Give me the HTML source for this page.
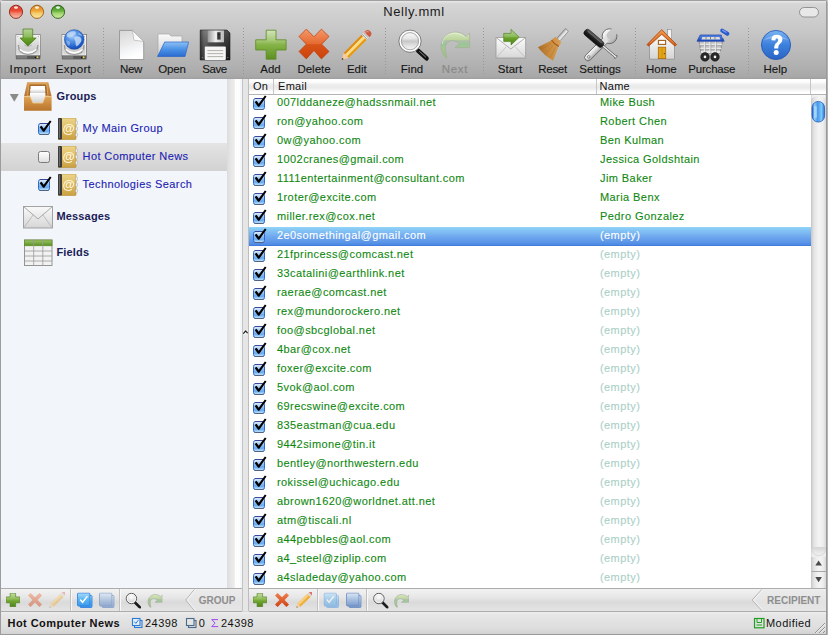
<!DOCTYPE html>
<html><head><meta charset="utf-8">
<style>
*{margin:0;padding:0;box-sizing:border-box}
html,body{width:828px;height:635px;overflow:hidden;background:#c8c8c8}
body{font-family:"Liberation Sans",sans-serif;position:relative}
.a{position:absolute}
#win{position:absolute;left:0;top:0;width:828px;height:635px;overflow:hidden;border-radius:4px 4px 0 0;background:#d8d8d8}
#tb{left:0;top:0;width:828px;height:79px;background:linear-gradient(#a0a0a0 0,#a0a0a0 1px,#eaeaea 1px,#e0e0e0 2px,#d6d6d6 4px,#d0d0d0 14px,#cacaca 26px,#c4c4c4 36px,#bebebe 44px,#b7b7b7 56px,#afafaf 68px,#a9a9a9 76px,#a4a4a4 78px,#9c9c9c 79px)}
#title{left:0;top:3px;width:828px;text-align:center;font-size:13px;letter-spacing:0.62px;color:#1a1a1a;line-height:18px}
.lbl{position:absolute;top:63px;font-size:11.5px;color:#161616;-webkit-text-stroke:0.12px #161616;line-height:13px;text-align:center;width:80px;margin-left:-40px;white-space:nowrap}
.sep{position:absolute;top:28px;height:46px;width:1px;background:repeating-linear-gradient(#979797 0 1px,transparent 1px 3px)}
#side{left:1px;top:79px;width:226px;height:509px;background:#f2f5f9}
#sstrip{left:227px;top:79px;width:15px;height:509px;background:linear-gradient(90deg,#dcdcdc 0,#e4e4e4 3px,#ececec 7px,#f2f2f2 8px,#fdfdfd 8.5px,#fdfdfd 13px,#f4f7fa 13px)}
#split{left:242px;top:79px;width:7px;height:532px;background:#e6e6e6;border-left:1px solid #c3c3c3;border-right:1px solid #bdbdbd}
#tbl{left:249px;top:79px;width:562px;height:509px;background:#fff}
#hdr{left:249px;top:79px;width:577px;height:15px;background:linear-gradient(#fff 0,#fcfcfc 3px,#ececec 6px,#eaeaea 9px,#f4f4f4 11px,#fff 13px)}
#hdrb{left:249px;top:94px;width:577px;height:1px;background:#b4b4b4}
.hd{position:absolute;top:79px;font-size:11px;letter-spacing:0.3px;color:#111;line-height:15px}
.vd{position:absolute;top:79px;width:1px;height:15px;background:#c6c6c6}
.row{position:absolute;left:249px;width:562px;height:19px}
.row .em{position:absolute;left:28px;top:1px;font-size:11px;line-height:15px;color:#108810;letter-spacing:0.42px;white-space:nowrap;-webkit-text-stroke:0.1px #108810}
.row .nm{position:absolute;left:351px;top:1px;font-size:11px;line-height:15px;color:#108810;letter-spacing:0.42px;white-space:nowrap;-webkit-text-stroke:0.1px #108810}
.row .nm.e{color:#aad0c6;-webkit-text-stroke:0.1px #aad0c6}
.row svg.cb{position:absolute;left:4px;top:0}
.row.sel{background:linear-gradient(#94d6f8 0,#88cbf6 2px,#7cb8f2 6px,#6ea6ee 10px,#5c96e8 15px,#4f8ae4 17.5px,#3e7ddc 18px)}
.row.sel .em,.row.sel .nm{color:#fff;-webkit-text-stroke:0.1px #fff}
#vscroll{left:811px;top:95px;width:15px;height:493px;background:linear-gradient(90deg,#c6c6c6,#e4e4e4 3px,#f4f4f4 8px,#eeeeee 12px,#d8d8d8)}
#rb{left:826px;top:0;width:2px;height:635px;background:linear-gradient(90deg,#9a9a9a 0,#9a9a9a 1px,#b4b4b4 1px)}
#bbl{left:1px;top:588px;width:241px;height:24px;background:linear-gradient(#f2f2f2,#e6e6e6 40%,#dadada 60%,#e4e4e4);border-top:1px solid #acacac;border-bottom:1px solid #acacac}
#bbr{left:249px;top:588px;width:577px;height:24px;background:linear-gradient(#f2f2f2,#e6e6e6 40%,#dadada 60%,#e4e4e4);border-top:1px solid #acacac;border-bottom:1px solid #acacac}
#status{left:0;top:612px;width:828px;height:23px;background:linear-gradient(#eeeeee,#e6e6e6 3px,#dedede 16px,#d2d2d2 22px);border-bottom:1px solid #9a9a9a}
#lb{left:0;top:0;width:1px;height:635px;background:#9c9c9c}
.st{position:absolute;font-size:11px;letter-spacing:0.45px;line-height:15px;color:#111;white-space:nowrap}
.sg{position:absolute;top:82px;font-size:11px;letter-spacing:0.15px;font-weight:bold;color:#1a1c58;line-height:15px}
.gi{position:absolute;font-size:11px;color:#1c22b4;line-height:15px;letter-spacing:0.4px;-webkit-text-stroke:0.1px #1c22b4;white-space:nowrap}

</style></head><body>
<svg width="0" height="0" style="position:absolute">
<defs>
<linearGradient id="cbg" x1="0" y1="0" x2="0" y2="1">
<stop offset="0" stop-color="#e4f0fb"/><stop offset="0.45" stop-color="#8cbdf2"/><stop offset="0.7" stop-color="#6aa8ee"/><stop offset="1" stop-color="#c4ecfa"/>
</linearGradient>
<linearGradient id="selg" x1="0" y1="0" x2="0" y2="1"><stop offset="0" stop-color="#e4e4e4"/><stop offset="1" stop-color="#d2d2d2"/></linearGradient>
<symbol id="chk" viewBox="0 0 15 16">
<rect x="0.5" y="4.5" width="11" height="11" rx="2" fill="url(#cbg)" stroke="#3068d0"/>
<path d="M2 4.5 H10" stroke="#3c4898" stroke-width="1"/>
<path d="M1.6 15.6 H10.4" stroke="#5a607a" stroke-width="1"/>
<path d="M1.6 7.9 L3.6 6.7 L5.7 9.8 L11.9 1.6 L13.5 2.6 L6.3 12.8 L5.1 12.8 Z" fill="#000"/>
</symbol>
<symbol id="uchk" viewBox="0 0 15 16">
<rect x="0.5" y="4.5" width="11" height="11" rx="2" fill="url(#ucb)" stroke="#7a7a7a"/>
</symbol>
</defs>
</svg>

<div id="win">
<div id="tb" class="a"></div>
<div id="title" class="a">Nelly.mml</div>
<svg class="a" style="left:0;top:0" width="828" height="79" viewBox="0 0 828 79">
<defs>
<linearGradient id="drv" x1="0" y1="0" x2="0" y2="1"><stop offset="0" stop-color="#f2f2f2"/><stop offset="0.5" stop-color="#d6d6d6"/><stop offset="1" stop-color="#bcbcbc"/></linearGradient>
<linearGradient id="garr" x1="0" y1="0" x2="0" y2="1"><stop offset="0" stop-color="#b6d49a"/><stop offset="0.45" stop-color="#8cbc5a"/><stop offset="0.55" stop-color="#6aa22c"/><stop offset="1" stop-color="#4a8414"/></linearGradient>
<radialGradient id="globe" cx="0.4" cy="0.3" r="0.75"><stop offset="0" stop-color="#b8d8fa"/><stop offset="0.35" stop-color="#5c9ae8"/><stop offset="0.8" stop-color="#1d5cc8"/><stop offset="1" stop-color="#1446a8"/></radialGradient>
<linearGradient id="page" x1="0" y1="0" x2="0.3" y2="1"><stop offset="0" stop-color="#d6d6d6"/><stop offset="0.45" stop-color="#e8e8e8"/><stop offset="0.8" stop-color="#f6f8fa"/><stop offset="1" stop-color="#ffffff"/></linearGradient>
<linearGradient id="fblue" x1="0" y1="0" x2="0" y2="1"><stop offset="0" stop-color="#8ec0f4"/><stop offset="0.5" stop-color="#4c92e6"/><stop offset="1" stop-color="#2a6ad0"/></linearGradient>
<linearGradient id="fback" x1="0" y1="0" x2="0" y2="1"><stop offset="0" stop-color="#fafafa"/><stop offset="1" stop-color="#cfcfcf"/></linearGradient>
<linearGradient id="flop" x1="0" y1="0" x2="0" y2="1"><stop offset="0" stop-color="#6a6a6a"/><stop offset="0.4" stop-color="#4a4a4a"/><stop offset="1" stop-color="#262626"/></linearGradient><linearGradient id="flop2" x1="0" y1="0" x2="1" y2="0"><stop offset="0" stop-color="#000" stop-opacity="0.35"/><stop offset="0.2" stop-color="#fff" stop-opacity="0.12"/><stop offset="0.5" stop-color="#000" stop-opacity="0"/><stop offset="1" stop-color="#000" stop-opacity="0.35"/></linearGradient>
<linearGradient id="shut" x1="0" y1="0" x2="1" y2="0"><stop offset="0" stop-color="#9a9a9a"/><stop offset="0.5" stop-color="#f0f0f0"/><stop offset="1" stop-color="#b8b8b8"/></linearGradient>
<linearGradient id="gplus" x1="0" y1="0" x2="0" y2="1"><stop offset="0" stop-color="#d4e4bc"/><stop offset="0.35" stop-color="#a6c878"/><stop offset="0.5" stop-color="#86b448"/><stop offset="1" stop-color="#5c9020"/></linearGradient>
<linearGradient id="rx" x1="0" y1="0" x2="0" y2="1"><stop offset="0" stop-color="#f0905a"/><stop offset="0.45" stop-color="#e66a30"/><stop offset="1" stop-color="#c83c0c"/></linearGradient>
<radialGradient id="lens" cx="0.5" cy="0.35" r="0.7"><stop offset="0" stop-color="#ffffff"/><stop offset="0.6" stop-color="#d0d0d0"/><stop offset="1" stop-color="#a8a8a8"/></radialGradient>
<linearGradient id="env" x1="0" y1="0" x2="0" y2="1"><stop offset="0" stop-color="#fcfcfc"/><stop offset="1" stop-color="#d8d8d8"/></linearGradient>
<linearGradient id="broom" x1="0" y1="0" x2="1" y2="1"><stop offset="0" stop-color="#e0a860"/><stop offset="0.6" stop-color="#c88a3c"/><stop offset="1" stop-color="#a86a24"/></linearGradient>
<linearGradient id="silver" x1="0" y1="0" x2="1" y2="0"><stop offset="0" stop-color="#8a8a8a"/><stop offset="0.5" stop-color="#f0f0f0"/><stop offset="1" stop-color="#9a9a9a"/></linearGradient>
<linearGradient id="roof" x1="0" y1="0" x2="0" y2="1"><stop offset="0" stop-color="#f09040"/><stop offset="1" stop-color="#c85810"/></linearGradient>
<linearGradient id="wall" x1="0" y1="0" x2="0" y2="1"><stop offset="0" stop-color="#ffffff"/><stop offset="1" stop-color="#d4d4d4"/></linearGradient>
<linearGradient id="cartb" x1="0" y1="0" x2="0" y2="1"><stop offset="0" stop-color="#5a8ae8"/><stop offset="1" stop-color="#1a48b8"/></linearGradient>
<linearGradient id="help" x1="0" y1="0" x2="0" y2="1"><stop offset="0" stop-color="#7ab4f4"/><stop offset="0.5" stop-color="#3c80dc"/><stop offset="1" stop-color="#2a64c4"/></linearGradient>
</defs>
<!-- Import: drive + green arrow -->
<defs>
<linearGradient id="drvface" x1="0" y1="0" x2="0" y2="1"><stop offset="0" stop-color="#f4f4f4"/><stop offset="0.35" stop-color="#dedede"/><stop offset="0.7" stop-color="#cdcdcd"/><stop offset="1" stop-color="#e2e2e2"/></linearGradient>
<symbol id="drive" viewBox="0 0 26 26">
<rect x="0.4" y="0.4" width="25.2" height="22" fill="url(#drvface)" stroke="#7a7a7a" stroke-width="0.8"/>
<rect x="1.6" y="1.6" width="22.8" height="19.6" fill="none" stroke="#ffffff" stroke-width="0.6" opacity="0.8"/>
<path d="M3 11 Q3 20.5 13 20.5 Q23 20.5 23 11" fill="none" stroke="#8e8e8e" stroke-width="1.4" opacity="0.8"/>
<path d="M4.5 15.5 Q13 22.5 21.5 15.5" fill="none" stroke="#ffffff" stroke-width="1.5"/>
<path d="M9 11 Q13 14 17 11" fill="none" stroke="#9a9a9a" stroke-width="1" opacity="0.6"/>
<circle cx="2.6" cy="2.6" r="0.5" fill="#777"/><circle cx="23.4" cy="2.6" r="0.5" fill="#777"/>
<rect x="0.4" y="21.6" width="25.2" height="4" fill="#5a5a5a"/>
<rect x="1" y="22.2" width="11" height="2.8" fill="#7a7a7a"/>
<circle cx="20.5" cy="23.8" r="0.8" fill="#111"/>
<circle cx="22.6" cy="23.4" r="0.9" fill="#f4d040"/>
</symbol>
</defs>
<use href="#drive" x="15.4" y="34" width="25.4" height="26"/>
<path d="M23 29 H32.7 V38 H36.2 L27.9 46 L20 38 H23 Z" fill="url(#garr)" stroke="#4a7a18" stroke-width="0.7"/>
<!-- Export: drive + globe -->
<use href="#drive" x="61.4" y="34" width="25.6" height="26"/>
<circle cx="74.2" cy="39.5" r="9.8" fill="url(#globe)" stroke="#1a4aa8" stroke-width="0.6"/>
<path d="M67 33.5 Q70 31 74.5 31.2 Q77 32.5 75 34.5 Q72.5 35 71 37 Q69 38 67.5 37 Q66 35.5 67 33.5 Z" fill="#c8def6" opacity="0.7"/>
<path d="M74.5 37 Q78 35.5 80.5 37.5 Q82.5 40 80.5 42.5 Q78.5 45.5 76.5 46.5 Q75 44 75.5 41.5 Q73.5 39.5 74.5 37 Z" fill="#d4e6f8" opacity="0.75"/>
<path d="M66 40.5 Q68.5 40 70 42 Q70.5 44.5 69 46 Q66.5 44.5 66 40.5 Z" fill="#a8c8f0" opacity="0.6"/>
<path d="M78.5 32.5 Q81 33.5 82.5 36 Q80.5 35.8 78.5 34.5 Z" fill="#c8def6" opacity="0.6"/>
<!-- New -->
<path d="M119.5 30.4 H132.4 L143.7 41.6 V59.5 H119.5 Z" fill="url(#page)" stroke="#8e8e8e" stroke-width="0.8"/>
<path d="M132.4 30.4 L134 40 L143.7 41.6 Z" fill="#b8b8b8" opacity="0.5"/>
<path d="M132.4 30.4 Q133.6 36 133.8 40.2 Q138.5 40.6 143.7 41.6 Z" fill="#fafafa" stroke="#a0a0a0" stroke-width="0.5"/>
<!-- Open -->
<path d="M158 56 V34 H169 L171 36 H182 V56 Z" fill="url(#fback)" stroke="#a8a8a8" stroke-width="0.7"/>
<path d="M157.5 56.5 L164.7 42 H188.6 L185 56.5 Z" fill="url(#fblue)" stroke="#2a64c4" stroke-width="0.7"/>
<!-- Save -->
<path d="M200.2 30 H227 L230 33 V60 H200.2 Z" fill="url(#flop)" stroke="#222" stroke-width="0.6"/>
<path d="M200.2 30 H227 L230 33 V60 H200.2 Z" fill="url(#flop2)"/>
<rect x="207.6" y="30.5" width="16.4" height="11.8" fill="url(#shut)"/>
<rect x="217.2" y="32.2" width="3.4" height="7.4" fill="#3a3a3a"/>
<circle cx="218.8" cy="34.2" r="0.5" fill="#000"/>
<rect x="204.8" y="46.6" width="21" height="13.4" rx="1" fill="#f6f6f6"/>
<rect x="207.4" y="50.2" width="15.8" height="0.9" fill="#a8a8a0"/>
<rect x="207.4" y="53.2" width="15.8" height="0.9" fill="#a8a8a0"/>
<rect x="207.4" y="56.2" width="15.8" height="0.9" fill="#a8a8a0"/>
<circle cx="202.4" cy="57.5" r="0.6" fill="#888"/><circle cx="227.8" cy="57.5" r="0.6" fill="#888"/>
<!-- Add -->
<path d="M266.2 30.2 H276 V39.8 H286.1 V50 H276 V59.2 H266.2 V50 H255.7 V39.8 H266.2 Z" fill="url(#gplus)" stroke="#5a8a22" stroke-width="0.8"/>
<!-- Delete -->
<defs><linearGradient id="rx2" x1="0" y1="0" x2="0" y2="1"><stop offset="0" stop-color="#f29a6a"/><stop offset="0.3" stop-color="#ec7c48"/><stop offset="0.5" stop-color="#e46a30"/><stop offset="0.52" stop-color="#d85418"/><stop offset="1" stop-color="#cc420c"/></linearGradient></defs>
<path d="M306.3 29.1 L314 36.8 L321.4 29.1 L329 36.5 L321.7 44.2 L329 51.5 L321.4 58.9 L314 50.4 L306.3 58.9 L299 51.5 L306.3 44.2 L299 36.5 Z" fill="url(#rx2)" stroke="#c03c08" stroke-width="0.7" stroke-linejoin="round"/>
<!-- Edit pencil -->
<g transform="translate(341.6 60) rotate(-45.2)">
<path d="M0 0 L6.5 -3.5 H32 V3.5 H6.5 Z" fill="#f0b440"/>
<path d="M6.5 -3.5 H32 V-1.6 H6.5 Z" fill="#dc8a14"/>
<path d="M6.5 -1.4 H32 V1.2 H6.5 Z" fill="#f8dc8c"/>
<path d="M6.5 1.6 H32 V3.5 H6.5 Z" fill="#e8980e"/>
<path d="M0 0 L6.5 -3.5 V3.5 Z" fill="#f2cca4"/>
<path d="M0 0 L2 -1.1 V1.1 Z" fill="#3a3a3a"/>
<rect x="32" y="-3.6" width="3.8" height="7.2" fill="#e8e8e8"/>
<path d="M32.8 -3.6 V3.6 M34.6 -3.6 V3.6" stroke="#7a7a7a" stroke-width="0.6"/>
<path d="M35.8 -3.6 H37 A3.6 3.6 0 0 1 37 3.6 H35.8 Z" fill="#cc5a40"/>
<path d="M36.2 -2.6 Q38.5 -2.4 39 -0.6" fill="none" stroke="#f0a090" stroke-width="0.9"/>
</g>
<!-- Find -->
<defs><linearGradient id="glass" x1="0" y1="0" x2="0" y2="1"><stop offset="0" stop-color="#fafafa"/><stop offset="0.35" stop-color="#e6e6e6"/><stop offset="0.5" stop-color="#c6c6c6"/><stop offset="0.75" stop-color="#e2e2e2"/><stop offset="1" stop-color="#f6f6f6"/></linearGradient></defs>
<path d="M418 50.6 L426.6 58.4" stroke="#111" stroke-width="4.4" stroke-linecap="round"/>
<path d="M419.5 51.4 L425.6 57" stroke="#8a8a8a" stroke-width="1" stroke-linecap="round"/>
<circle cx="410" cy="41.2" r="8.8" fill="url(#glass)"/>
<circle cx="410" cy="41.2" r="9.8" fill="none" stroke="#fdfdfd" stroke-width="2.2"/>
<circle cx="410" cy="41.2" r="11.1" fill="none" stroke="#5a5a5a" stroke-width="0.7"/>
<circle cx="410" cy="41.2" r="8.6" fill="none" stroke="#7a7a7a" stroke-width="0.6"/>
<!-- Next (disabled) -->
<defs><linearGradient id="nxg" gradientUnits="userSpaceOnUse" x1="0" y1="32" x2="0" y2="58"><stop offset="0" stop-color="#d8e8c0"/><stop offset="0.3" stop-color="#bcd49c"/><stop offset="0.33" stop-color="#b0c0a8"/><stop offset="0.45" stop-color="#9cc49c"/><stop offset="0.6" stop-color="#a4c890"/><stop offset="1" stop-color="#a0bc88"/></linearGradient></defs>
<path d="M445.5 57.8 C439.5 51 439.5 41 446 35.5 C452 30.5 461 31 466 36.6 L469.6 33 L469.6 47.6 L455 47.6 L459.6 43.6 C455 39.6 449 40 446.6 43.6 C444.6 47 445.4 53 447.2 57.8 Z" fill="url(#nxg)" stroke="#a0b098" stroke-width="0.7" stroke-linejoin="round"/>
<path d="M442.2 44 C443 38 447 34 453 33.2 C458 33 462 34.5 465.5 37.5" fill="none" stroke="#eef4e4" stroke-width="0.8" opacity="0.8"/>
<!-- Start: envelope + arrow -->
<rect x="496" y="37.5" width="29.7" height="20.5" fill="url(#env)" stroke="#9a9a9a" stroke-width="0.8"/>
<path d="M496 37.5 L510.8 49 L525.7 37.5" fill="none" stroke="#a8a8a8" stroke-width="0.9"/>
<path d="M496.5 57.5 L506 47 M525.2 57.5 L515.5 47" stroke="#b8b8b8" stroke-width="0.7"/>
<path d="M503.7 33.4 H511 V29.3 L519.2 37.3 L511 45 V41.6 H503.7 Z" fill="url(#garr)" stroke="#4a7a18" stroke-width="0.6"/>
<!-- Reset broom -->
<g transform="translate(566.4 30.5) rotate(131.5)">
<rect x="-1" y="-2" width="13.5" height="4" rx="1.2" fill="url(#wrg)" stroke="#6a6a6a" stroke-width="0.6"/>
<path d="M12 -4 Q16 -4.6 18 -5 L31.5 -10.2 Q33.5 0 31.5 10.2 L18 5 Q16 4.6 12 4 Z" fill="url(#broom)"/>
<path d="M17 -4.8 Q18.5 0 17 4.8" fill="none" stroke="#a85a18" stroke-width="1.2"/>
<path d="M20 -3 L31 -6 M20 0 L32 0 M20 3 L31 6" stroke="#b07028" stroke-width="0.6" opacity="0.7"/>
</g>
<!-- Settings: wrench + screwdriver -->
<defs>
<linearGradient id="wrg" x1="0" y1="0" x2="0" y2="1"><stop offset="0" stop-color="#fafafa"/><stop offset="0.55" stop-color="#d8d8d8"/><stop offset="1" stop-color="#a8a8a8"/></linearGradient>
<mask id="wmask" maskUnits="userSpaceOnUse" x="-10" y="-15" width="50" height="30"><rect x="-10" y="-15" width="50" height="30" fill="#fff"/><circle cx="31.5" cy="0" r="3.6" fill="#000"/><rect x="31.5" y="-3.6" width="10" height="7.2" fill="#000"/></mask>
<linearGradient id="sdg" x1="0" y1="0" x2="0" y2="1"><stop offset="0" stop-color="#6a6a6a"/><stop offset="0.35" stop-color="#2a2a2a"/><stop offset="1" stop-color="#0a0a0a"/></linearGradient>
</defs>
<g transform="translate(588 57.5) rotate(-44.7)">
<g mask="url(#wmask)">
<path d="M0 -3.3 H24 V3.3 H0 A3.3 3.3 0 0 1 0 -3.3 Z" fill="url(#wrg)" stroke="#5a5a5a" stroke-width="0.8"/>
<circle cx="30.3" cy="0" r="7.4" fill="url(#wrg)" stroke="#5a5a5a" stroke-width="0.8"/>
<rect x="20" y="-2.9" width="6" height="5.8" fill="#e0e0e0"/>
</g>
<circle cx="1" cy="0" r="1.3" fill="none" stroke="#7a7a7a" stroke-width="0.8"/>
</g>
<g transform="translate(585.7 31.4) rotate(40.3)">
<path d="M22 -1 H38 L40 -1.8 V1.8 L38 1 H22 Z" fill="#e8e8e8" stroke="#3a3a3a" stroke-width="0.6"/>
<rect x="-1" y="-3.4" width="23.5" height="6.8" rx="3" fill="url(#sdg)" stroke="#111" stroke-width="0.6"/>
<rect x="1.5" y="-2" width="18" height="1.1" fill="#8a8a8a" opacity="0.6"/>
</g>
<!-- Home -->
<rect x="667.6" y="29.4" width="4" height="9" fill="#f4f4f4" stroke="#8a8a8a" stroke-width="0.6"/>
<path d="M649.5 43 L661.7 33 L674.5 43 V59.2 H649.5 Z" fill="url(#wall)" stroke="#8a8a8a" stroke-width="0.7"/>
<path d="M647 44.6 L661.7 29.6 L676.6 44.6 L675 46.2 L661.7 34.4 L648.6 46.2 Z" fill="url(#roof)" stroke="#a84010" stroke-width="0.7" stroke-linejoin="round"/>
<path d="M650 43 L661.7 31.6 L673.6 43" fill="none" stroke="#f8b070" stroke-width="0.6" opacity="0.8"/>
<rect x="658.4" y="40.4" width="7.2" height="4" fill="#fff" stroke="#a0601a" stroke-width="1.1"/>
<rect x="658.3" y="47.2" width="7.4" height="11.4" fill="#e4a416" stroke="#a86a08" stroke-width="0.8"/>
<path d="M662 48 V58" stroke="#c88a10" stroke-width="0.6"/>
<circle cx="664.4" cy="53.6" r="0.7" fill="#444"/>
<!-- Purchase cart -->
<path d="M699 41 L701 53 H720 L722.5 41 Z" fill="#c4c4c4" opacity="0.55"/>
<path d="M699 41 L701 53 H720 L722.5 41" fill="none" stroke="#8a8a8a" stroke-width="1"/>
<path d="M699.6 44.5 H722 M700.3 48.5 H721.2 M700.8 52 H720.4" stroke="#f4f4f4" stroke-width="1.3"/>
<path d="M699.6 45.3 H722 M700.3 49.3 H721.2" stroke="#8a8a8a" stroke-width="0.6"/>
<path d="M704.5 41 V53 M710 41 V53 M715.5 41 V53" stroke="#f0f0f0" stroke-width="1.2"/>
<path d="M705.3 41 V53 M710.8 41 V53 M716.3 41 V53" stroke="#8a8a8a" stroke-width="0.5"/>
<path d="M700.2 35 H721.2 L724.2 41.2 H697 Z" fill="url(#cartb)" stroke="#1a3ea8" stroke-width="0.7" stroke-linejoin="round"/>
<path d="M702.4 37 H719.4 L720.4 39.4 H701.4 Z" fill="#dcdcdc"/>
<path d="M706 37 V39.4 M710.5 37 V39.4 M715 37 V39.4" stroke="#6a6a6a" stroke-width="0.8"/>
<path d="M722.5 37.5 L724.6 32" stroke="#c8c8c8" stroke-width="1.4"/>
<path d="M722.2 30.6 L727.4 33.8" stroke="#2a5ad0" stroke-width="4" stroke-linecap="round"/>
<path d="M722.6 30.2 L726 32.2" stroke="#7aa4f0" stroke-width="1.2" stroke-linecap="round"/>
<circle cx="705" cy="56.9" r="4.3" fill="#2a2a2a" stroke="#111" stroke-width="0.5"/><circle cx="705" cy="56.9" r="1.3" fill="#f4f4f4"/>
<circle cx="715" cy="56.9" r="4.3" fill="#2a2a2a" stroke="#111" stroke-width="0.5"/><circle cx="715" cy="56.9" r="1.3" fill="#f4f4f4"/>
<!-- Help -->
<circle cx="776" cy="45" r="14.6" fill="url(#help)" stroke="#1f52b4" stroke-width="0.8"/>
<path d="M764 40 Q776 31 788 40 Q776 36 764 40 Z" fill="#bcd8fa" opacity="0.5"/>
<path d="M771.4 40.2 Q771.4 34.8 776.8 34.8 Q782.4 34.8 782.4 39.6 Q782.4 42.8 779.4 44.6 Q778.2 45.4 778.2 48.4 H774.2 Q774 44.2 776.8 42.4 Q778.2 41.4 778.2 39.8 Q778.2 38.2 776.8 38.2 Q775.4 38.2 775.4 40.6 Z" fill="#fff"/>
<circle cx="776.2" cy="52.6" r="2.5" fill="#fff"/>
<!-- window pill -->
<rect x="799.5" y="7.5" width="19" height="9.5" rx="4.75" fill="#e8e8e8" stroke="#8a8a8a" stroke-width="0.9"/>
<!-- traffic lights -->
<defs>
<linearGradient id="tlr" x1="0" y1="0" x2="0" y2="1"><stop offset="0" stop-color="#d83a28"/><stop offset="0.45" stop-color="#ee4a34"/><stop offset="0.6" stop-color="#f0806a"/><stop offset="1" stop-color="#f8c0b0"/></linearGradient>
<linearGradient id="tly" x1="0" y1="0" x2="0" y2="1"><stop offset="0" stop-color="#d88020"/><stop offset="0.45" stop-color="#f0a838"/><stop offset="0.6" stop-color="#f4cc6a"/><stop offset="1" stop-color="#fae8a0"/></linearGradient>
<linearGradient id="tlg" x1="0" y1="0" x2="0" y2="1"><stop offset="0" stop-color="#3a8a22"/><stop offset="0.45" stop-color="#6ab440"/><stop offset="0.6" stop-color="#a0d470"/><stop offset="1" stop-color="#d0f0a0"/></linearGradient>
</defs>
<circle cx="16" cy="11.8" r="6.6" fill="url(#tlr)" stroke="#8a2414" stroke-width="0.9"/>
<circle cx="37" cy="11.8" r="6.6" fill="url(#tly)" stroke="#9a5a10" stroke-width="0.9"/>
<circle cx="58" cy="11.8" r="6.6" fill="url(#tlg)" stroke="#2a5a18" stroke-width="0.9"/>
<ellipse cx="16" cy="7.6" rx="2" ry="1.3" fill="#fff" opacity="0.85"/>
<ellipse cx="37" cy="7.6" rx="2" ry="1.3" fill="#fff" opacity="0.85"/>
<ellipse cx="58" cy="7.6" rx="2" ry="1.3" fill="#fff" opacity="0.85"/>
</svg>

<div class="sep" style="left:103px"></div>
<div class="sep" style="left:243px"></div>
<div class="sep" style="left:385px"></div>
<div class="sep" style="left:483px"></div>
<div class="sep" style="left:635px"></div>
<div class="sep" style="left:748px"></div>
<div class="lbl" style="left:28px;letter-spacing:0.7px">Import</div>
<div class="lbl" style="left:73.5px;letter-spacing:0.35px">Export</div>
<div class="lbl" style="left:131px;letter-spacing:-0.35px">New</div>
<div class="lbl" style="left:172px;letter-spacing:-0.2px">Open</div>
<div class="lbl" style="left:214.5px;letter-spacing:-0.4px">Save</div>
<div class="lbl" style="left:270.5px">Add</div>
<div class="lbl" style="left:314px">Delete</div>
<div class="lbl" style="left:356.8px">Edit</div>
<div class="lbl" style="left:412px">Find</div>
<div class="lbl" style="left:455px;color:#888;-webkit-text-stroke:0.12px #888;letter-spacing:0.7px">Next</div>
<div class="lbl" style="left:510px">Start</div>
<div class="lbl" style="left:552.6px;letter-spacing:-0.3px">Reset</div>
<div class="lbl" style="left:600px">Settings</div>
<div class="lbl" style="left:661.3px">Home</div>
<div class="lbl" style="left:711.8px;letter-spacing:-0.2px">Purchase</div>
<div class="lbl" style="left:775.3px">Help</div>

<div id="side" class="a"></div>
<div id="sstrip" class="a"></div>
<div id="split" class="a"></div>
<svg class="a" style="left:242px;top:328px" width="7" height="9" viewBox="0 0 7 9"><path d="M1.3 5.6 L3.6 3 L5.6 5.2" fill="none" stroke="#111" stroke-width="1.1"/><path d="M2.4 6.6 L3.6 5.4 L4.8 6.6" fill="none" stroke="#fff" stroke-width="1"/></svg>
<div id="tbl" class="a"></div>
<div id="hdr" class="a"></div>
<div class="hd" style="left:253px">On</div>
<div class="vd" style="left:273px"></div>
<div class="hd" style="left:278px">Email</div>
<div class="vd" style="left:596px"></div>
<div class="hd" style="left:599.5px">Name</div>
<div class="vd" style="left:810px"></div>
<div class="row" style="top:94px"><svg class="cb" width="15" height="16"><use href="#chk"/></svg><span class="em">007lddaneze@hadssnmail.net</span><span class="nm">Mike Bush</span></div>
<div class="row" style="top:113px"><svg class="cb" width="15" height="16"><use href="#chk"/></svg><span class="em">ron@yahoo.com</span><span class="nm">Robert Chen</span></div>
<div class="row" style="top:132px"><svg class="cb" width="15" height="16"><use href="#chk"/></svg><span class="em">0w@yahoo.com</span><span class="nm">Ben Kulman</span></div>
<div class="row" style="top:151px"><svg class="cb" width="15" height="16"><use href="#chk"/></svg><span class="em">1002cranes@gmail.com</span><span class="nm">Jessica Goldshtain</span></div>
<div class="row" style="top:170px"><svg class="cb" width="15" height="16"><use href="#chk"/></svg><span class="em">1111entertainment@consultant.com</span><span class="nm">Jim Baker</span></div>
<div class="row" style="top:189px"><svg class="cb" width="15" height="16"><use href="#chk"/></svg><span class="em">1roter@excite.com</span><span class="nm">Maria Benx</span></div>
<div class="row" style="top:208px"><svg class="cb" width="15" height="16"><use href="#chk"/></svg><span class="em">miller.rex@cox.net</span><span class="nm">Pedro Gonzalez</span></div>
<div class="row sel" style="top:227px"><svg class="cb" width="15" height="16"><use href="#chk"/></svg><span class="em">2e0somethingal@gmail.com</span><span class="nm e">(empty)</span></div>
<div class="row" style="top:246px"><svg class="cb" width="15" height="16"><use href="#chk"/></svg><span class="em">21fprincess@comcast.net</span><span class="nm e">(empty)</span></div>
<div class="row" style="top:265px"><svg class="cb" width="15" height="16"><use href="#chk"/></svg><span class="em">33catalini@earthlink.net</span><span class="nm e">(empty)</span></div>
<div class="row" style="top:284px"><svg class="cb" width="15" height="16"><use href="#chk"/></svg><span class="em">raerae@comcast.net</span><span class="nm e">(empty)</span></div>
<div class="row" style="top:303px"><svg class="cb" width="15" height="16"><use href="#chk"/></svg><span class="em">rex@mundorockero.net</span><span class="nm e">(empty)</span></div>
<div class="row" style="top:322px"><svg class="cb" width="15" height="16"><use href="#chk"/></svg><span class="em">foo@sbcglobal.net</span><span class="nm e">(empty)</span></div>
<div class="row" style="top:341px"><svg class="cb" width="15" height="16"><use href="#chk"/></svg><span class="em">4bar@cox.net</span><span class="nm e">(empty)</span></div>
<div class="row" style="top:360px"><svg class="cb" width="15" height="16"><use href="#chk"/></svg><span class="em">foxer@excite.com</span><span class="nm e">(empty)</span></div>
<div class="row" style="top:379px"><svg class="cb" width="15" height="16"><use href="#chk"/></svg><span class="em">5vok@aol.com</span><span class="nm e">(empty)</span></div>
<div class="row" style="top:398px"><svg class="cb" width="15" height="16"><use href="#chk"/></svg><span class="em">69recswine@excite.com</span><span class="nm e">(empty)</span></div>
<div class="row" style="top:417px"><svg class="cb" width="15" height="16"><use href="#chk"/></svg><span class="em">835eastman@cua.edu</span><span class="nm e">(empty)</span></div>
<div class="row" style="top:436px"><svg class="cb" width="15" height="16"><use href="#chk"/></svg><span class="em">9442simone@tin.it</span><span class="nm e">(empty)</span></div>
<div class="row" style="top:455px"><svg class="cb" width="15" height="16"><use href="#chk"/></svg><span class="em">bentley@northwestern.edu</span><span class="nm e">(empty)</span></div>
<div class="row" style="top:474px"><svg class="cb" width="15" height="16"><use href="#chk"/></svg><span class="em">rokissel@uchicago.edu</span><span class="nm e">(empty)</span></div>
<div class="row" style="top:493px"><svg class="cb" width="15" height="16"><use href="#chk"/></svg><span class="em">abrown1620@worldnet.att.net</span><span class="nm e">(empty)</span></div>
<div class="row" style="top:512px"><svg class="cb" width="15" height="16"><use href="#chk"/></svg><span class="em">atm@tiscali.nl</span><span class="nm e">(empty)</span></div>
<div class="row" style="top:531px"><svg class="cb" width="15" height="16"><use href="#chk"/></svg><span class="em">a44pebbles@aol.com</span><span class="nm e">(empty)</span></div>
<div class="row" style="top:550px"><svg class="cb" width="15" height="16"><use href="#chk"/></svg><span class="em">a4_steel@ziplip.com</span><span class="nm e">(empty)</span></div>
<div class="row" style="top:569px"><svg class="cb" width="15" height="16"><use href="#chk"/></svg><span class="em">a4sladeday@yahoo.com</span><span class="nm e">(empty)</span></div>
<div id="hdrb" class="a"></div>
<div id="vscroll" class="a"></div>
<svg class="a" style="left:806px;top:94px" width="22" height="496" viewBox="806 94 22 496">
<defs>
<linearGradient id="thumb" x1="0" y1="0" x2="1" y2="0"><stop offset="0" stop-color="#1a5cc8"/><stop offset="0.2" stop-color="#8ec8f6"/><stop offset="0.45" stop-color="#4a98ea"/><stop offset="0.75" stop-color="#7ccaf8"/><stop offset="1" stop-color="#2a70d4"/></linearGradient>
<linearGradient id="cap" x1="0" y1="0" x2="0" y2="1"><stop offset="0" stop-color="#d4d4d4"/><stop offset="1" stop-color="#f4f4f4"/></linearGradient>
</defs>
<path d="M811.5 95 V100 Q811.5 96 818.5 96 Q825.5 96 825.5 100 V95 Z" fill="#f6f6f6" opacity="0.8"/>
<rect x="812" y="101.4" width="12.6" height="20.7" rx="6.3" fill="url(#thumb)" stroke="#1552b8" stroke-width="0.7"/>
<rect x="814.2" y="106" width="2.6" height="12" rx="1.2" fill="#b8e0fa" opacity="0.7"/>
<path d="M811.5 547 Q811.5 555.5 818.7 555.5 Q825.8 555.5 825.8 547 V557 H811.5 Z" fill="#eeeeee"/>
<path d="M811.5 547 Q811.5 555.5 818.7 555.5 Q825.8 555.5 825.8 547" fill="url(#cap)" stroke="#c8c8c8" stroke-width="0.6"/>
<path d="M815.3 565.6 H821.9 L818.6 560.5 Z" fill="#4a4a4a"/>
<rect x="811.5" y="571" width="14.5" height="1" fill="#a8a8a8"/>
<path d="M815.3 577 H821.9 L818.6 582.3 Z" fill="#4a4a4a"/>
</svg>


<div id="bbl" class="a"></div>
<div id="bbr" class="a"></div>
<div id="status" class="a"></div>
<svg class="a" style="left:0;top:586px" width="828" height="49" viewBox="0 586 828 49">
<defs>
<linearGradient id="bplus" x1="0" y1="0" x2="0" y2="1"><stop offset="0" stop-color="#c4dca4"/><stop offset="0.4" stop-color="#94c05c"/><stop offset="0.55" stop-color="#74a834"/><stop offset="1" stop-color="#4e8418"/></linearGradient>
<linearGradient id="bx" x1="0" y1="0" x2="0" y2="1"><stop offset="0" stop-color="#f08050"/><stop offset="1" stop-color="#d04010"/></linearGradient>
<linearGradient id="stk" x1="0" y1="0" x2="0" y2="1"><stop offset="0" stop-color="#a8dcfa"/><stop offset="0.5" stop-color="#5ab4f2"/><stop offset="1" stop-color="#3a9cec"/></linearGradient>
<linearGradient id="stk2" x1="0" y1="0" x2="0" y2="1"><stop offset="0" stop-color="#dce8f6"/><stop offset="0.5" stop-color="#a8c0e0"/><stop offset="1" stop-color="#7a9acc"/></linearGradient>
<radialGradient id="blens" cx="0.5" cy="0.35" r="0.7"><stop offset="0" stop-color="#ffffff"/><stop offset="1" stop-color="#c8c8c8"/></radialGradient>
<symbol id="bplusS" viewBox="0 0 14 14"><path d="M4.1 0.2 H9.6 V3.9 H13.8 V9.8 H9.6 V13.8 H4.1 V9.8 H0.2 V3.9 H4.1 Z" fill="url(#bplus)" stroke="#4a7a18" stroke-width="0.6"/></symbol>
<symbol id="bxS" viewBox="0 0 14 14"><path d="M2.6 0 L7 4.3 L11.4 0 L14 2.6 L9.6 7 L14 11.4 L11.4 14 L7 9.6 L2.6 14 L0 11.4 L4.4 7 L0 2.6 Z" fill="url(#bx)"/></symbol>
<symbol id="bpenS" viewBox="0 0 16 16"><g transform="translate(0.5 15.5) rotate(-44)">
<path d="M0 0 L3.5 -2.2 H17.5 V2.2 H3.5 Z" fill="#f0b040"/><path d="M3.5 -2.2 H17.5 V0 H3.5 Z" fill="#f8d080"/>
<path d="M0 0 L3.5 -2.2 V2.2 Z" fill="#f0d0b0"/><path d="M0 0 L1.2 -0.7 V0.7 Z" fill="#444"/>
<rect x="17.5" y="-2.3" width="2" height="4.6" fill="#d8d8d8"/><path d="M19.5 -2.3 H20 A2.3 2.3 0 0 1 20 2.3 H19.5 Z" fill="#e07070"/></g></symbol>
<symbol id="bstkS" viewBox="0 0 16 16"><rect x="3" y="3" width="12" height="12" rx="1" fill="url(#stk)" stroke="#2a7ae0" stroke-width="0.8"/><rect x="0.5" y="0.5" width="12.4" height="13" rx="1" fill="url(#stk)" stroke="#2a7ae0" stroke-width="0.8"/><path d="M3.2 7 L5.6 9.8 L10.4 3.6" fill="none" stroke="#fff" stroke-width="1.4"/></symbol>
<symbol id="bstk2S" viewBox="0 0 16 16"><rect x="3" y="3" width="12" height="12" rx="1" fill="url(#stk2)" stroke="#6a8ac0" stroke-width="0.8"/><rect x="0.5" y="0.5" width="12.4" height="13" rx="1" fill="url(#stk2)" stroke="#6a8ac0" stroke-width="0.8"/></symbol>
<symbol id="bfindS" viewBox="0 0 16 16"><path d="M9.5 9.5 L15 15" stroke="#1a1a1a" stroke-width="2.6" stroke-linecap="round"/><circle cx="6.4" cy="6" r="5.2" fill="url(#blens)" stroke="#555" stroke-width="1"/><circle cx="6.4" cy="6" r="4.2" fill="none" stroke="#fff" stroke-width="0.8"/></symbol>
<symbol id="bnextS" viewBox="439 31 31 27"><path d="M445.5 57.8 C439.5 51 439.5 41 446 35.5 C452 30.5 461 31 466 36.6 L469.6 33 L469.6 47.6 L455 47.6 L459.6 43.6 C455 39.6 449 40 446.6 43.6 C444.6 47 445.4 53 447.2 57.8 Z" fill="url(#nxg)" stroke="#98a890" stroke-width="1.2" stroke-linejoin="round"/></symbol>
</defs>
<!-- left bar icons -->
<use href="#bplusS" x="6" y="593" width="14" height="14"/>
<use href="#bxS" x="28" y="593" width="14" height="14" opacity="0.45"/>
<use href="#bpenS" x="49" y="592" width="16" height="16" opacity="0.45"/>
<path d="M70.5 589 V611" stroke="#c0c0c0"/><path d="M71.5 589 V611" stroke="#f8f8f8"/>
<use href="#bstkS" x="77" y="592.5" width="16" height="16"/>
<use href="#bstk2S" x="99" y="592.5" width="16" height="16" opacity="0.75"/>
<path d="M119.5 589 V611" stroke="#c0c0c0"/><path d="M120.5 589 V611" stroke="#f8f8f8"/>
<use href="#bfindS" x="125" y="592.5" width="16" height="16"/>
<use href="#bnextS" x="147" y="594" width="15.5" height="13.5" opacity="0.9"/>
<!-- GROUP tab -->
<path d="M242 589.5 H194.3 L185.8 600 L194.3 610.5 H242" fill="#e8e8e8" opacity="0.6"/>
<path d="M194.3 589.5 L185.8 600 L194.3 610.5" fill="none" stroke="#b4b4b4" stroke-width="1"/>
<path d="M195.5 589.5 L187.2 600 L195.5 610.5" fill="none" stroke="#fafafa" stroke-width="0.8"/>
<text x="198.8" y="604" font-family="Liberation Sans" font-weight="bold" font-size="10" fill="#8e8e8e">GROUP</text>
<!-- right bar icons -->
<use href="#bplusS" x="253" y="593" width="14" height="14"/>
<use href="#bxS" x="275" y="593" width="14" height="14"/>
<use href="#bpenS" x="296" y="592" width="16" height="16"/>
<path d="M317.5 589 V611" stroke="#c0c0c0"/><path d="M318.5 589 V611" stroke="#f8f8f8"/>
<use href="#bstkS" x="323.5" y="592.5" width="16" height="16" opacity="0.45"/>
<use href="#bstk2S" x="346" y="592.5" width="16" height="16"/>
<path d="M366.5 589 V611" stroke="#c0c0c0"/><path d="M367.5 589 V611" stroke="#f8f8f8"/>
<use href="#bfindS" x="372.5" y="592.5" width="16" height="16"/>
<use href="#bnextS" x="393.5" y="594" width="15.5" height="13.5" opacity="0.9"/>
<!-- RECIPIENT tab -->
<path d="M826 589.5 H761.8 L752.2 600 L761.8 610.5 H826" fill="#e8e8e8" opacity="0.6"/>
<path d="M761.8 589.5 L752.2 600 L761.8 610.5" fill="none" stroke="#b4b4b4" stroke-width="1"/>
<path d="M763 589.5 L753.6 600 L763 610.5" fill="none" stroke="#fafafa" stroke-width="0.8"/>
<text x="767.1" y="604" font-family="Liberation Sans" font-weight="bold" font-size="10" fill="#8e8e8e">RECIPIENT</text>
<!-- status icons -->
<rect x="134.5" y="620.5" width="7.5" height="7" fill="none" stroke="#2a7ad8" stroke-width="1.1"/>
<rect x="132.5" y="618.5" width="7.5" height="7" fill="#e8f0fa" stroke="#2a7ad8" stroke-width="1.1"/>
<path d="M134.3 621.6 L135.8 623.4 L138.6 619.8" fill="none" stroke="#2a7ad8" stroke-width="1"/>
<rect x="188.5" y="620.5" width="7.5" height="7" fill="none" stroke="#4a6a8a" stroke-width="1.1"/>
<rect x="186.5" y="618.5" width="7.5" height="7" fill="#e4e4e4" stroke="#4a6a8a" stroke-width="1.1"/>
<path d="M211.6 619.6 H218 M211.6 626.6 H218.2 M211.8 619.6 L215 623.1 L211.8 626.6" fill="none" stroke="#a048f0" stroke-width="1"/>
<!-- modified icon -->
<rect x="754.5" y="618.5" width="9.5" height="9.3" fill="none" stroke="#20a020" stroke-width="1.2"/>
<path d="M757 618.5 V622.5 H761.5 V618.5 M756.5 625 H762" fill="none" stroke="#20a020" stroke-width="1"/>
<!-- resize grip -->
<path d="M815 633 L825 623 M819 633 L825 627 M823 633 L825 631" stroke="#8a8a8a" stroke-width="0.9"/>
<path d="M816 633 L825 624 M820 633 L825 628" stroke="#fafafa" stroke-width="0.6"/>
</svg>

<div class="st" style="left:7.5px;top:616px;font-weight:bold;letter-spacing:0.44px">Hot Computer News</div>
<div class="st" style="left:145px;top:616px">24398</div>
<div class="st" style="left:198.7px;top:616px">0</div>
<div class="st" style="left:221px;top:616px">24398</div>
<div class="st" style="left:766px;top:616px">Modified</div>

<svg class="a" style="left:0;top:79px" width="242" height="200" viewBox="0 79 242 200">
<defs>
<linearGradient id="tray" x1="0" y1="0" x2="0" y2="1"><stop offset="0" stop-color="#d89c50"/><stop offset="1" stop-color="#b87430"/></linearGradient>
<linearGradient id="trayf" x1="0" y1="0" x2="0" y2="1"><stop offset="0" stop-color="#e0a458"/><stop offset="0.5" stop-color="#cc8a3e"/><stop offset="1" stop-color="#b8742c"/></linearGradient>
<linearGradient id="paper" x1="0" y1="0" x2="0" y2="1"><stop offset="0" stop-color="#ffffff"/><stop offset="1" stop-color="#cfcfcf"/></linearGradient>
<linearGradient id="bookc" x1="0" y1="0" x2="0" y2="1"><stop offset="0" stop-color="#ecd488"/><stop offset="0.5" stop-color="#e0bc62"/><stop offset="1" stop-color="#caa040"/></linearGradient>
<linearGradient id="ucb" x1="0" y1="0" x2="0" y2="1"><stop offset="0" stop-color="#ffffff"/><stop offset="0.5" stop-color="#f0f0f0"/><stop offset="1" stop-color="#dcdcdc"/></linearGradient>
<linearGradient id="envs" x1="0" y1="0" x2="0" y2="1"><stop offset="0" stop-color="#fafafa"/><stop offset="1" stop-color="#d6d6d6"/></linearGradient>
<linearGradient id="gridg" x1="0" y1="0" x2="0" y2="1"><stop offset="0" stop-color="#9cc468"/><stop offset="1" stop-color="#5a9020"/></linearGradient>
<symbol id="book" viewBox="0 0 20 22">
<rect x="0" y="0" width="18" height="21.6" rx="1" fill="url(#bookc)" stroke="#b08a30" stroke-width="0.6"/>
<rect x="0" y="0" width="4" height="21.6" rx="1" fill="#3c3c3c"/>
<rect x="1" y="1" width="1" height="19" fill="#6a6a6a"/>
<rect x="17.5" y="3" width="2" height="3.6" rx="0.8" fill="#f0f0f0" stroke="#9a9a9a" stroke-width="0.4"/>
<rect x="17.5" y="9" width="2" height="3.6" rx="0.8" fill="#f0f0f0" stroke="#9a9a9a" stroke-width="0.4"/>
<rect x="17.5" y="15" width="2" height="3.6" rx="0.8" fill="#f0f0f0" stroke="#9a9a9a" stroke-width="0.4"/>
<text x="10.6" y="15" font-family="Liberation Sans" font-size="12.5" font-weight="bold" text-anchor="middle" fill="#fffbea" opacity="0.92">@</text>
</symbol>
</defs>
<!-- selected band -->
<rect x="1" y="143" width="226" height="28" fill="url(#selg)"/>
<!-- triangle -->
<path d="M9.8 94 H18.8 L14.3 101.7 Z" fill="#8a8a8a"/>
<!-- tray -->
<path d="M27.2 82.2 H48.4 L51.6 96.6 H24 Z" fill="url(#tray)"/>
<path d="M29 84 H46.6 L48 96 H27.6 Z" fill="#a86a2c" stroke="#f0c880" stroke-width="0.6"/>
<rect x="30.6" y="86" width="14.4" height="3" fill="#ffffff"/><rect x="30.6" y="89" width="14.4" height="0.6" fill="#b8b8b8"/>
<rect x="30.2" y="89" width="15" height="4" fill="url(#paper)"/>
<rect x="30" y="93" width="15.4" height="10" fill="url(#paper)"/>
<path d="M24 96.6 H30.2 L33 103 H42.6 L45.2 96.6 H51.6 V110.8 H24 Z" fill="url(#trayf)"/>
<path d="M24 96.6 H30.2 L33 103 H42.6 L45.2 96.6 H51.6" fill="none" stroke="#f4d090" stroke-width="0.8"/>
<!-- groups -->
<use href="#book" x="58" y="118" width="20" height="22"/>
<use href="#book" x="58" y="146" width="20" height="22"/>
<use href="#book" x="58" y="174" width="20" height="22"/>
<!-- envelope -->
<rect x="23.5" y="206.5" width="29" height="21.5" fill="url(#envs)" stroke="#9a9a9a" stroke-width="0.9"/>
<path d="M23.5 206.5 L38 219 L52.5 206.5" fill="none" stroke="#a0a0a0" stroke-width="0.9"/>
<path d="M24 227.5 L33.5 214.5 M52 227.5 L42.5 214.5" stroke="#b0b0b0" stroke-width="0.8"/>
<!-- fields grid -->
<rect x="24.5" y="240" width="27.5" height="25.5" fill="#f2f2f2" stroke="#8a8a8a" stroke-width="0.9"/>
<rect x="24.5" y="240" width="27.5" height="5.8" fill="url(#gridg)" stroke="#5a8a20" stroke-width="0.6"/>
<path d="M24.5 251 H52 M24.5 256 H52 M24.5 261 H52 M33.7 240 V265.5 M42.8 240 V265.5" stroke="#9a9a9a" stroke-width="0.8"/>
</svg>

<svg class="a" style="left:38px;top:119px" width="15" height="16"><use href="#chk"/></svg>
<svg class="a" style="left:38px;top:147px" width="15" height="16"><use href="#uchk"/></svg>
<svg class="a" style="left:38px;top:175px" width="15" height="16"><use href="#chk"/></svg>
<div class="sg" style="left:56.5px;top:89px">Groups</div>
<div class="gi" style="left:82.6px;top:121px">My Main Group</div>
<div class="gi" style="left:82.6px;top:149px">Hot Computer News</div>
<div class="gi" style="left:82.6px;top:177px">Technologies Search</div>
<div class="sg" style="left:56.5px;top:209px">Messages</div>
<div class="sg" style="left:56.5px;top:245px">Fields</div>

<div id="rb" class="a"></div>
<div id="lb" class="a"></div>
</div>

</body></html>
